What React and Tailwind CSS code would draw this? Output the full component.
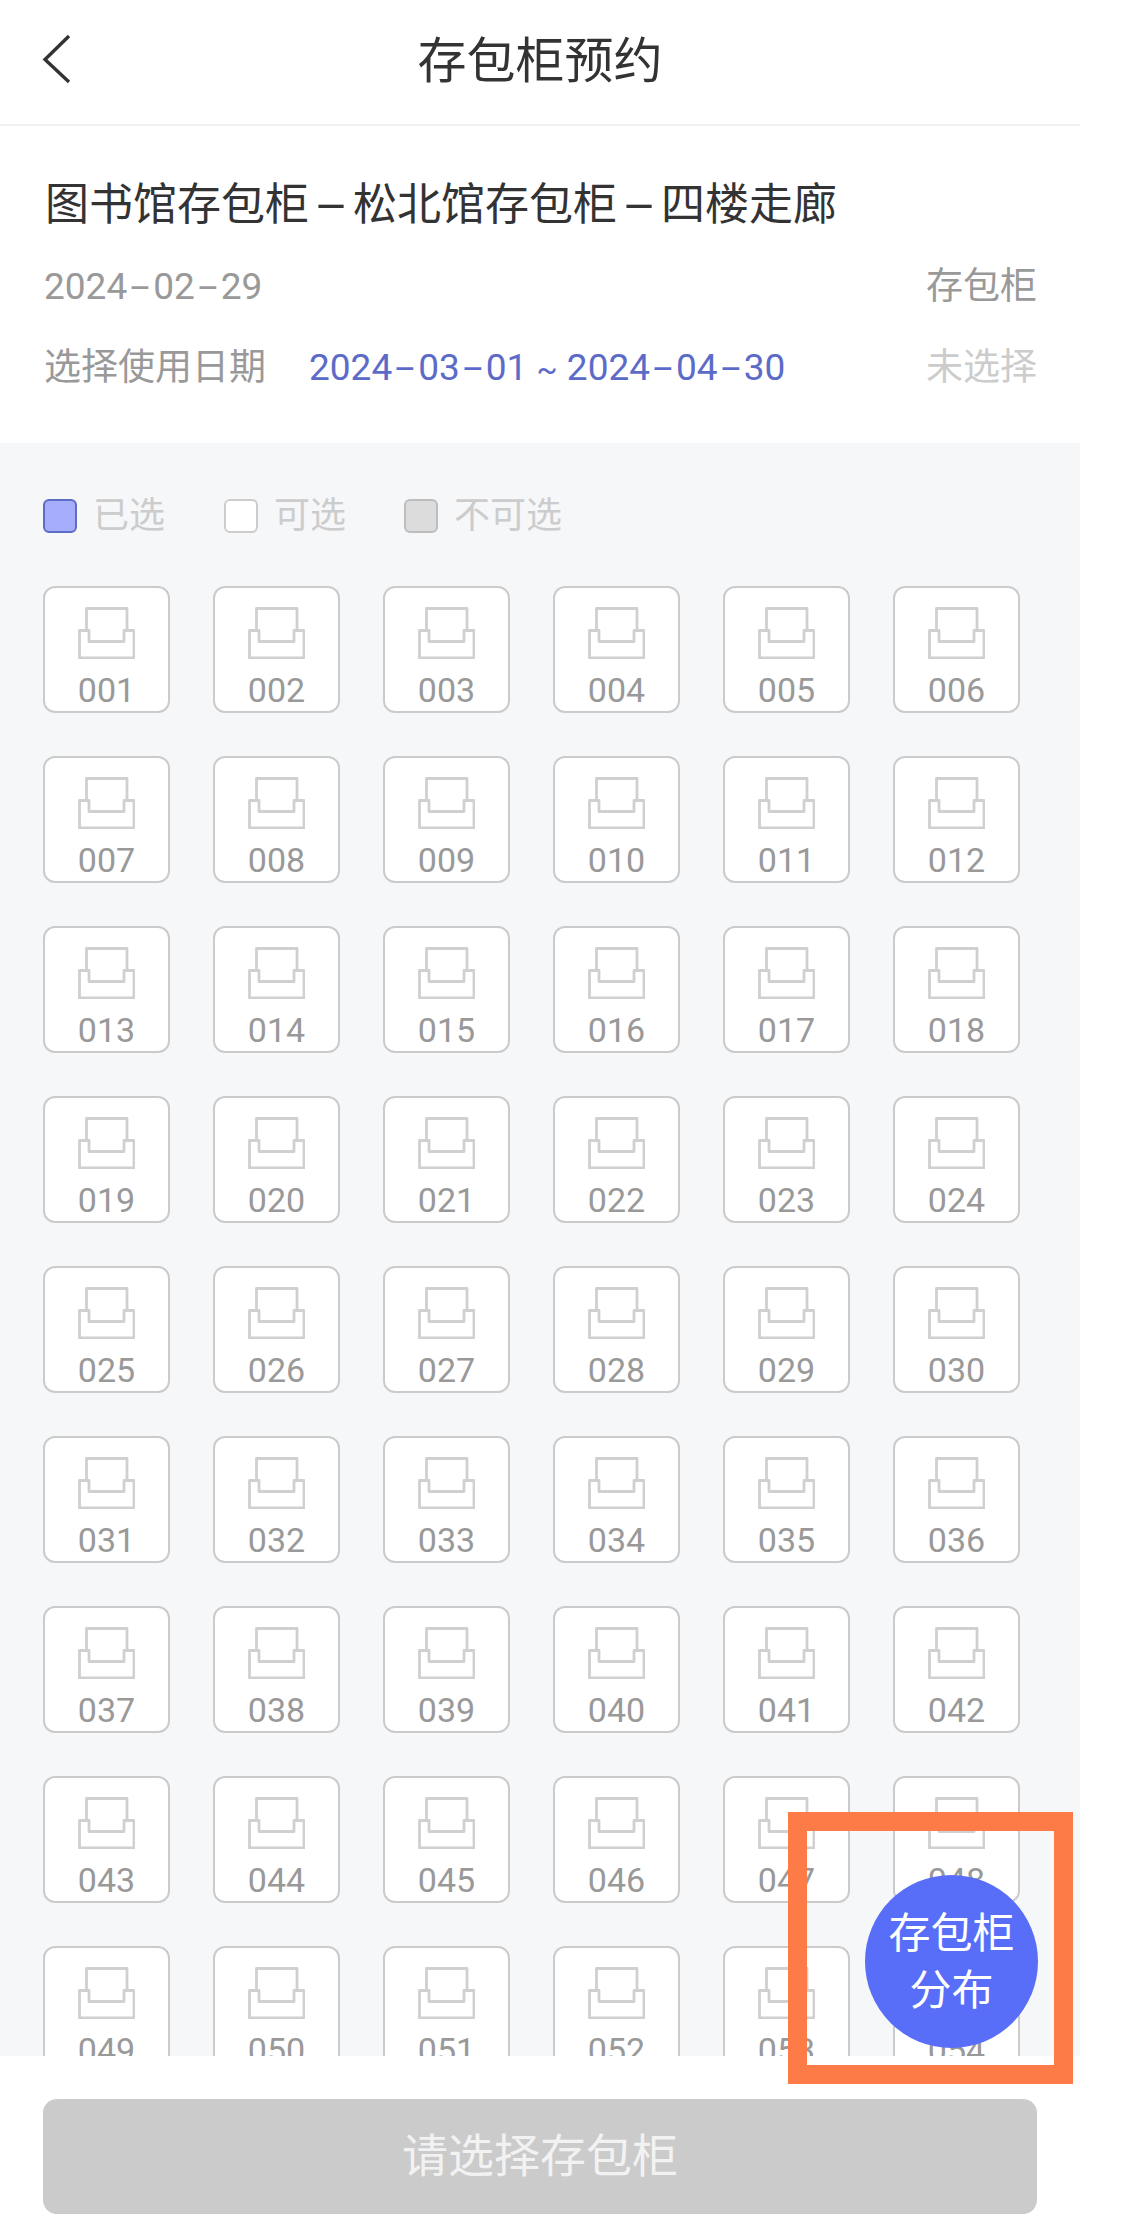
const FONT = 'font-["Roboto","Noto_Sans_CJK_SC",sans-serif]';

function Dash({ className = "" }) {
  return <span className={`inline-block text-center ${className}`}>-</span>;
}

function DateText({ y, m, d }) {
  return (
    <span>
      {y}<Dash className="w-[26px] scale-x-[1.9]" />{m}<Dash className="w-[26px] scale-x-[1.9]" />{d}
    </span>
  );
}

function LockerIcon() {
  return (
    <svg width="57" height="52" viewBox="0 0 57 52" fill="none" stroke="#d0d0d0" strokeWidth="2.8" strokeLinejoin="round">
      <path d="M8.5 23V1.5H49V23" />
      <path d="M1.5 23.5H11V34.5H46V23.5H56V51H1.5Z" />
    </svg>
  );
}

function Locker({ label }) {
  return (
    <div className="w-[127px] h-[127px] shrink-0 rounded-[12px] border-2 border-[#cbcbcb] bg-white flex flex-col items-center pt-[19px]">
      <LockerIcon />
      <span className="mt-[11px] text-[34px] leading-[40px] text-[#999999]">{label}</span>
    </div>
  );
}

function Legend({ box, label, className }) {
  return (
    <div className={`flex items-center gap-[16px] ${className}`}>
      <span className={`w-[34px] h-[34px] rounded-[6px] border-2 ${box}`} />
      <span className="text-[36px] leading-[40px] text-[#cccccc]">{label}</span>
    </div>
  );
}

export default function App() {
  const lockers = Array.from({ length: 54 }, (_, i) => String(i + 1).padStart(3, "0"));
  return (
    <div className={`relative w-[1133px] h-[2232px] overflow-hidden bg-white ${FONT}`}>
      <div className="w-[1080px] h-full flex flex-col">
        <header className="relative h-[126px] shrink-0 border-b-2 border-[#f0f0f0] flex items-center justify-center">
          <svg className="absolute left-[42px] top-[34px]" width="30" height="50" viewBox="0 0 30 50" fill="none" stroke="#333333" strokeWidth="3.4">
            <path d="M27 2L3 25.5L27 48" />
          </svg>
          <h1 className="text-[49px] leading-[60px] text-[#333333] mt-[-1px]">存包柜预约</h1>
        </header>

        <section className="h-[317px] shrink-0 pl-[44px] pr-[43px] pt-[49px]">
          <h2 className="ml-[1px] text-[44px] leading-[60px] text-[#333333] whitespace-nowrap">
            图书馆存包柜<Dash className="w-[44px] scale-x-[2.4]" />松北馆存包柜<Dash className="w-[44px] scale-x-[2.4]" />四楼走廊
          </h2>
          <div className="mt-[29px] flex justify-between text-[37px] leading-[46px] text-[#999999]">
            <DateText y="2024" m="02" d="29" />
            <span>存包柜</span>
          </div>
          <div className="mt-[35px] flex justify-between text-[37px] leading-[46px]">
            <div className="flex">
              <span className="text-[#999999] w-[265px]">选择使用日期</span>
              <span className="text-[#5c6bc8] whitespace-nowrap">
                <DateText y="2024" m="03" d="01" /> <span className="text-[31px]">~</span> <DateText y="2024" m="04" d="30" />
              </span>
            </div>
            <span className="text-[#cccccc]">未选择</span>
          </div>
        </section>

        <main className="flex-1 min-h-0 overflow-hidden bg-[#f6f7f9] pl-[43px]">
          <div className="flex h-[55px] mt-[45px] items-center">
            <Legend box="bg-[#a6aefc] border-[#5f6bc4]" label="已选" className="w-[181px]" />
            <Legend box="bg-white border-[#cccccc]" label="可选" className="w-[180px]" />
            <Legend box="bg-[#dcdcdc] border-[#bdbdbd]" label="不可选" />
          </div>
          <div className="mt-[43px] grid grid-cols-[repeat(6,127px)] gap-[43px]">
            {lockers.map((l) => <Locker key={l} label={l} />)}
          </div>
        </main>

        <footer className="h-[176px] shrink-0 px-[43px] pt-[43px]">
          <button className="w-full h-[115px] rounded-[14px] bg-[#cbcbcb] text-[46px] text-[#f2f2f2]">请选择存包柜</button>
        </footer>
      </div>

      <div className="absolute left-[865px] top-[1875px] w-[173px] h-[173px] rounded-full bg-[#586ef8] text-white text-[42px] leading-[57px] flex flex-col items-center justify-center">
        <span>存包柜</span>
        <span>分布</span>
      </div>
      <div className="absolute left-[788px] top-[1812px] w-[285px] h-[272px] border-[19px] border-[#fd7b46]" />
    </div>
  );
}
